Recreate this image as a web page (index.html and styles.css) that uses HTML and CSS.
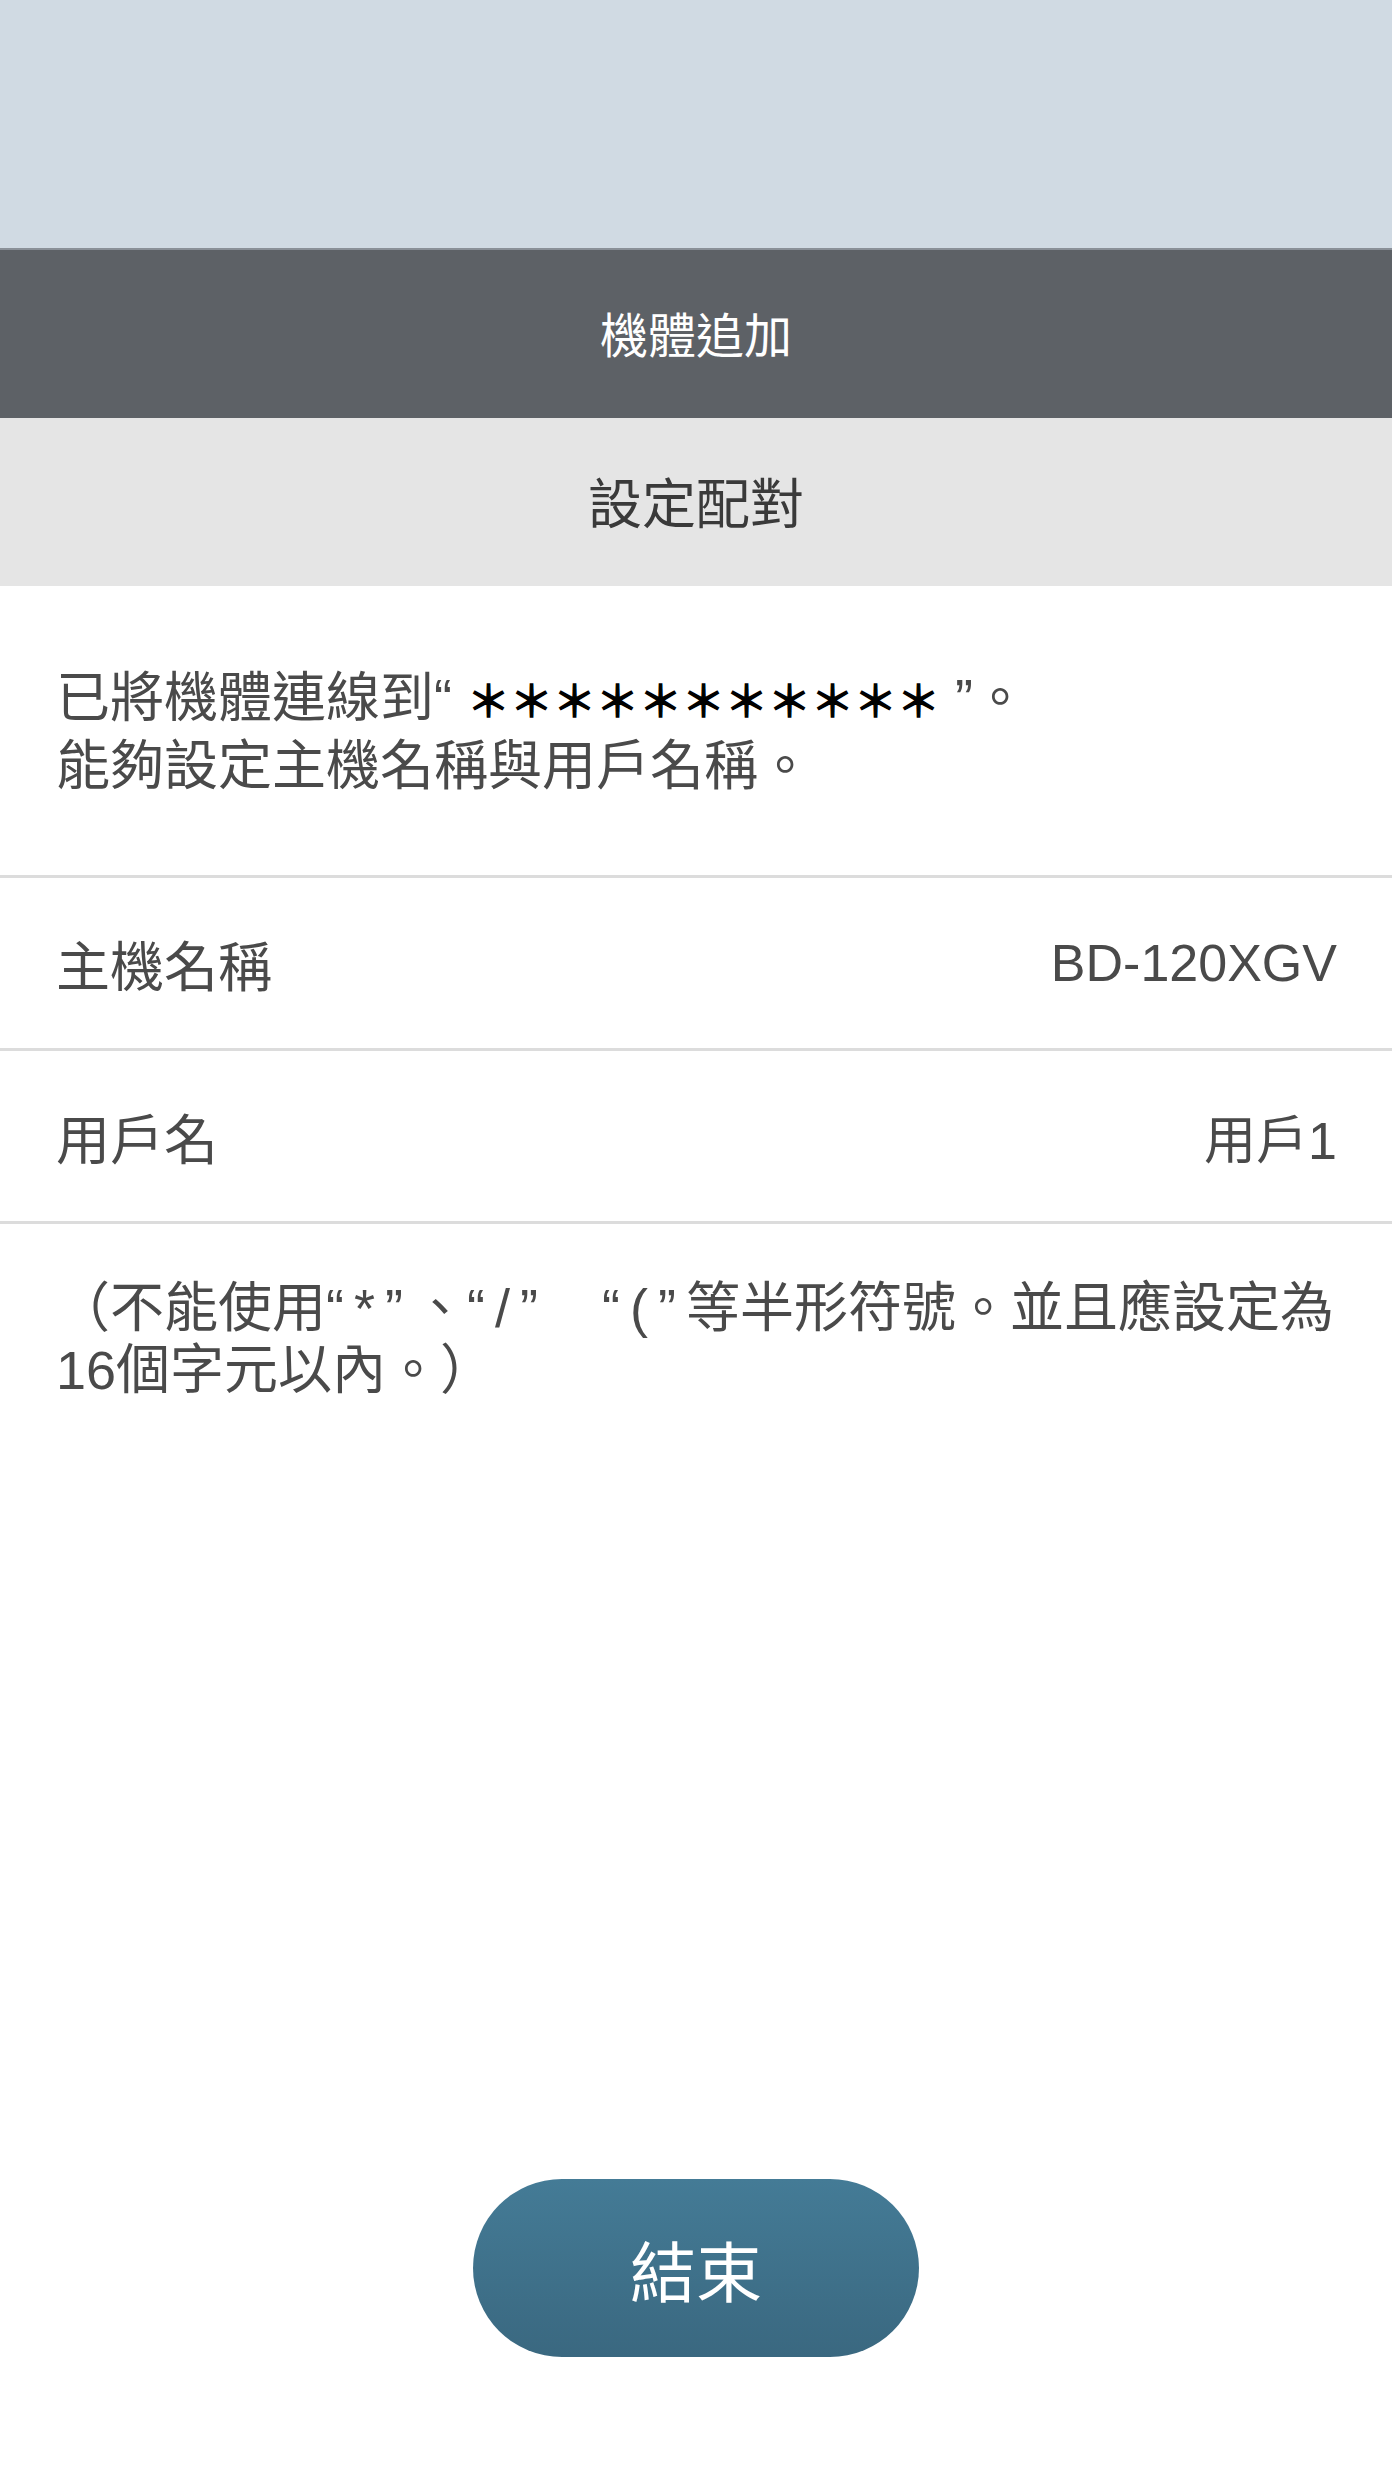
FILE: index.html
```html
<!DOCTYPE html>
<html lang="zh-Hant">
<head>
  <meta charset="UTF-8" />
  <meta name="viewport" content="width=device-width, initial-scale=1.0"/>
  <title>機體追加</title>
  <link rel="stylesheet" href="styles.css">
</head>
<body>
  <div class="page">
    <div class="top-band"></div>

    <div class="title-bar">機體追加</div>
    <div class="sub-bar">設定配對</div>

    <p class="message">
      已將機體連線到“ <span class="mask">＊＊＊＊＊＊＊＊＊＊＊</span> ”。<br>
      能夠設定主機名稱與用戶名稱。
    </p>

    <div class="row">
      <span class="row-label">主機名稱</span>
      <span class="row-value">BD-120XGV</span>
    </div>
    <div class="row">
      <span class="row-label">用戶名</span>
      <span class="row-value">用戶1</span>
    </div>

    <p class="note">（不能使用<span class="sym">“*”</span>、<span class="sym">“/”</span>　<span class="sym">“(”</span>等半形符號。並且應設定為<br>16個字元以內。）</p>

    <div class="footer">
      <button class="finish-btn">結束</button>
    </div>
  </div>
</body>
</html>
```

FILE: styles.css
```css
* {
  box-sizing: border-box;
  margin: 0;
  padding: 0;
}

body {
  background: #fff;
  font-family: 'Liberation Sans', 'Noto Sans CJK TC', sans-serif;
  color: #4a4a4a;
}

.page {
  min-height: 100vh;
  display: flex;
  flex-direction: column;
}

.top-band {
  height: 248px;
  background: #d0dae3;
}

.title-bar {
  height: 170px;
  display: flex;
  align-items: center;
  justify-content: center;
  background: #5d6166;
  border-top: 2px solid #8a9098;
  color: #fff;
  font-size: 48px;
  padding-bottom: 4px;
}

.sub-bar {
  height: 168px;
  display: flex;
  align-items: center;
  justify-content: center;
  background: #e5e5e5;
  color: #3a3a3a;
  font-size: 54px;
  padding-bottom: 4px;
}

.message {
  padding: 78px 56px 75px;
  font-size: 54px;
  line-height: 68px;
  border-bottom: 3px solid #dcdcdc;
}

.mask {
  color: #000;
  font-family: 'Noto Sans CJK TC', sans-serif;
  font-size: 43px;
  -webkit-text-stroke: 1.4px #000;
}

.row {
  height: 173px;
  display: flex;
  align-items: center;
  justify-content: space-between;
  padding: 0 55px 0 56px;
  border-bottom: 3px solid #dcdcdc;
  font-size: 54px;
}

.row-value {
  font-size: 52px;
}

.note {
  padding: 53px 56px 0;
  font-size: 54px;
  line-height: 62px;
}

.sym {
  letter-spacing: 10px;
}

.footer {
  margin-top: auto;
  display: flex;
  justify-content: center;
  padding-bottom: 118px;
}

.finish-btn {
  width: 446px;
  height: 178px;
  border: none;
  border-radius: 89px;
  background: linear-gradient(to bottom, #447b96, #3a6880);
  color: #fff;
  font-family: 'Noto Sans CJK TC', sans-serif;
  font-size: 66px;
}
```
